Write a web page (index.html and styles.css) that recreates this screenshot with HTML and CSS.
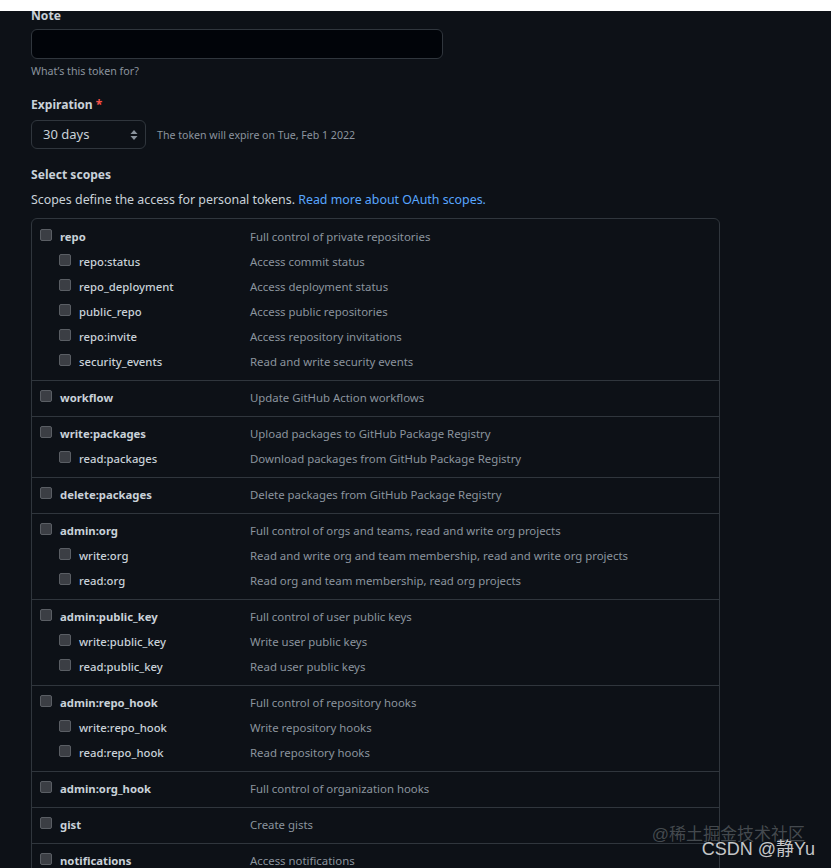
FILE: index.html
```html
<!DOCTYPE html>
<html>
<head>
<meta charset="utf-8">
<link rel="stylesheet" href="styles.css">
</head>
<body>
<div class="topbar"></div>
<div class="page">
  <div class="form">
    <div class="label note-label">Note</div>
    <div class="input"></div>
    <div class="hint">What’s this token for?</div>

    <div class="label exp-label">Expiration <span class="req">*</span></div>
    <div class="exp-row">
      <div class="select">30 days
        <svg class="updown" width="8" height="12" viewBox="0 0 8 12"><path d="M4 1 L7.5 5 H0.5 Z M4 11 L0.5 7 H7.5 Z" fill="#8b949e"/></svg>
      </div>
      <div class="exp-note">The token will expire on Tue, Feb 1 2022</div>
    </div>

    <div class="label scopes-label">Select scopes</div>
    <div class="scopes-desc">Scopes define the access for personal tokens. <a class="link">Read more about OAuth scopes.</a></div>

    <div class="scopes">
      <div class="group">
        <div class="row"><div class="name top"><span class="cb"></span>repo</div><div class="desc">Full control of private repositories</div></div>
        <div class="row"><div class="name sub"><span class="cb"></span>repo:status</div><div class="desc">Access commit status</div></div>
        <div class="row"><div class="name sub"><span class="cb"></span>repo_deployment</div><div class="desc">Access deployment status</div></div>
        <div class="row"><div class="name sub"><span class="cb"></span>public_repo</div><div class="desc">Access public repositories</div></div>
        <div class="row"><div class="name sub"><span class="cb"></span>repo:invite</div><div class="desc">Access repository invitations</div></div>
        <div class="row"><div class="name sub"><span class="cb"></span>security_events</div><div class="desc">Read and write security events</div></div>
      </div>
      <div class="group">
        <div class="row"><div class="name top"><span class="cb"></span>workflow</div><div class="desc">Update GitHub Action workflows</div></div>
      </div>
      <div class="group">
        <div class="row"><div class="name top"><span class="cb"></span>write:packages</div><div class="desc">Upload packages to GitHub Package Registry</div></div>
        <div class="row"><div class="name sub"><span class="cb"></span>read:packages</div><div class="desc">Download packages from GitHub Package Registry</div></div>
      </div>
      <div class="group">
        <div class="row"><div class="name top"><span class="cb"></span>delete:packages</div><div class="desc">Delete packages from GitHub Package Registry</div></div>
      </div>
      <div class="group">
        <div class="row"><div class="name top"><span class="cb"></span>admin:org</div><div class="desc">Full control of orgs and teams, read and write org projects</div></div>
        <div class="row"><div class="name sub"><span class="cb"></span>write:org</div><div class="desc">Read and write org and team membership, read and write org projects</div></div>
        <div class="row"><div class="name sub"><span class="cb"></span>read:org</div><div class="desc">Read org and team membership, read org projects</div></div>
      </div>
      <div class="group">
        <div class="row"><div class="name top"><span class="cb"></span>admin:public_key</div><div class="desc">Full control of user public keys</div></div>
        <div class="row"><div class="name sub"><span class="cb"></span>write:public_key</div><div class="desc">Write user public keys</div></div>
        <div class="row"><div class="name sub"><span class="cb"></span>read:public_key</div><div class="desc">Read user public keys</div></div>
      </div>
      <div class="group">
        <div class="row"><div class="name top"><span class="cb"></span>admin:repo_hook</div><div class="desc">Full control of repository hooks</div></div>
        <div class="row"><div class="name sub"><span class="cb"></span>write:repo_hook</div><div class="desc">Write repository hooks</div></div>
        <div class="row"><div class="name sub"><span class="cb"></span>read:repo_hook</div><div class="desc">Read repository hooks</div></div>
      </div>
      <div class="group">
        <div class="row"><div class="name top"><span class="cb"></span>admin:org_hook</div><div class="desc">Full control of organization hooks</div></div>
      </div>
      <div class="group">
        <div class="row"><div class="name top"><span class="cb"></span>gist</div><div class="desc">Create gists</div></div>
      </div>
      <div class="group">
        <div class="row"><div class="name top"><span class="cb"></span>notifications</div><div class="desc">Access notifications</div></div>
      </div>
    </div>
  </div>
  <div class="watermark">
    <div class="wm1">@稀土掘金技术社区</div>
    <div class="wm2">CSDN @静Yu</div>
  </div>
</div>
</body>
</html>
```
FILE: styles.css
```css
html, body {
  margin: 0;
  padding: 0;
  background: #0d1117;
  height: 868px;
  overflow: hidden;
}
body {
  font-family: "Noto Sans", "Open Sans", sans-serif;
  color: #c9d1d9;
}
.topbar {
  height: 11px;
  background: #ffffff;
}
.page {
  position: relative;
  height: 857px;
  overflow: hidden;
}
.form {
  padding-left: 31px;
}
.label {
  font-size: 12.1px;
  font-weight: 700;
  line-height: 18px;
  color: #c9d1d9;
}
.note-label {
  margin-top: -4px;
}
.input {
  margin-top: 4px;
  width: 410px;
  height: 28px;
  border: 1px solid #30363d;
  border-radius: 6px;
  background: #010409;
}
.hint {
  margin-top: 4px;
  font-size: 10.7px;
  line-height: 16px;
  color: #8b949e;
}
.exp-label {
  margin-top: 17px;
}
.req {
  color: #f85149;
}
.exp-row {
  margin-top: 6px;
  display: flex;
  align-items: center;
}
.select {
  position: relative;
  box-sizing: border-box;
  width: 115px;
  height: 29px;
  border: 1px solid #30363d;
  border-radius: 6px;
  background: #0d1117;
  font-size: 13px;
  line-height: 27px;
  padding-left: 11px;
  display: flex;
  align-items: center;
  justify-content: space-between;
  padding-right: 7px;
}
.exp-note {
  margin-left: 11px;
  font-size: 10.6px;
  color: #8b949e;
}
.scopes-label {
  margin-top: 17px;
}
.scopes-desc {
  margin-top: 7px;
  font-size: 12.4px;
  line-height: 18px;
  color: #c9d1d9;
}
.link {
  color: #58a6ff;
}
.scopes {
  margin-top: 9px;
  width: 687px;
  border: 1px solid #30363d;
  border-radius: 6px;
}
.group {
  padding: 5px 0;
}
.group:first-child {
  padding-top: 6px;
  padding-bottom: 5px;
}
.group + .group {
  border-top: 1px solid #30363d;
}
.row {
  display: grid;
  box-sizing: border-box;
  grid-template-columns: 218px 1fr;
  height: 25px;
  padding-bottom: 2px;
  align-items: center;
  font-size: 11.3px;
}
.name {
  display: flex;
  align-items: center;
  color: #c9d1d9;
}
.name.top {
  padding-left: 8px;
  font-weight: 700;
}
.name.sub {
  padding-left: 27px;
  font-weight: 500;
}
.cb {
  box-sizing: border-box;
  width: 12px;
  height: 12px;
  margin-right: 8px;
  margin-top: -3px;
  background: #3b3e44;
  border: 1px solid #5a5e64;
  border-radius: 2px;
  flex: none;
}
.desc {
  color: #8b949e;
  font-size: 11.4px;
}
.watermark {
  position: absolute;
  right: 16px;
  top: 815px;
  text-align: right;
  font-family: "Liberation Sans", "Noto Sans CJK SC", sans-serif;
}
.wm1 {
  font-size: 17px;
  line-height: 18px;
  color: rgba(140, 145, 150, 0.45);
  margin-right: 10px;
}
.wm2 {
  font-size: 18px;
  line-height: 18px;
  margin-top: -4px;
  color: #c4c6c8;
}
```
